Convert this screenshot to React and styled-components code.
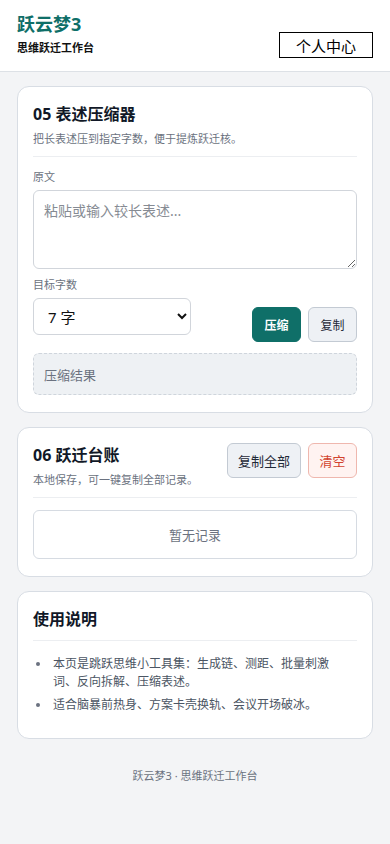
import React from 'react';
import styled, { createGlobalStyle } from 'styled-components';

const GlobalStyle = createGlobalStyle`
    * { box-sizing: border-box; }
    html, body {
        margin: 0;
        padding: 0;
        background: #f3f4f6;
        font-family: "Noto Sans", "Noto Sans CJK SC", sans-serif;
        color: #111827;
    }
`;

const App = () => {
    return (
        <>
            <GlobalStyle />
            <Header>
                <div className="brand">
                    <h1>跃云梦3</h1>
                    <p>思维跃迁工作台</p>
                </div>
                <ProfileButton>个人中心</ProfileButton>
            </Header>
            <Main>
                <CardTail />
                <Card>
                    <CardHead>
                        <div>
                            <h2>05 表述压缩器</h2>
                            <p>把长表述压到指定字数，便于提炼跃迁核。</p>
                        </div>
                    </CardHead>
                    <Label>原文</Label>
                    <TextArea placeholder="粘贴或输入较长表述..." />
                    <Label className="mt">目标字数</Label>
                    <ControlRow>
                        <Select defaultValue="7">
                            <option value="7">7 字</option>
                            <option value="12">12 字</option>
                            <option value="20">20 字</option>
                        </Select>
                        <Actions $offset={9}>
                            <Button $variant="primary">压缩</Button>
                            <Button>复制</Button>
                        </Actions>
                    </ControlRow>
                    <ResultBox>压缩结果</ResultBox>
                </Card>

                <Card>
                    <CardHead>
                        <div>
                            <h2>06 跃迁台账</h2>
                            <p>本地保存，可一键复制全部记录。</p>
                        </div>
                        <Actions>
                            <Button $size="md">复制全部</Button>
                            <Button $variant="danger" $size="md">清空</Button>
                        </Actions>
                    </CardHead>
                    <EmptyBox>暂无记录</EmptyBox>
                </Card>

                <Card>
                    <CardHead>
                        <div>
                            <h2>使用说明</h2>
                        </div>
                    </CardHead>
                    <Notes>
                        <li>本页是跳跃思维小工具集：生成链、测距、批量刺激词、反向拆解、压缩表述。</li>
                        <li>适合脑暴前热身、方案卡壳换轨、会议开场破冰。</li>
                    </Notes>
                </Card>
            </Main>
            <Footer>跃云梦3 · 思维跃迁工作台</Footer>
        </>
    );
};

export default App;

const Header = styled.header`
    display: flex;
    justify-content: space-between;
    align-items: flex-end;
    height: 72px;
    padding: 0 17px 13px 17px;
    background: #fff;
    border-bottom: 1px solid #dde1e6;

    .brand {
        padding-bottom: 2px;

        h1 {
            margin: 0;
            font-size: 18px;
            line-height: 24px;
            font-weight: 700;
            color: #0f6f68;
        }

        p {
            margin: 4px 0 0;
            font-size: 11px;
            line-height: 16px;
            font-weight: 700;
            color: #111;
        }
    }
`;

const ProfileButton = styled.button`
    width: 94px;
    height: 26px;
    padding: 0;
    background: #fff;
    border: 1px solid #000;
    border-radius: 0;
    font-family: inherit;
    font-size: 15px;
    color: #000;
`;

const Main = styled.main`
    display: flex;
    flex-direction: column;
    gap: 14px;
    padding: 0 17px;
    margin-top: -1px;
`;

const CardTail = styled.div`
    height: 1px;
    border: 1px solid #dde1e6;
    border-top: none;
    border-radius: 0 0 8px 8px;
    background: #fff;
`;

const Card = styled.section`
    background: #fff;
    border: 1px solid #d8dde4;
    border-radius: 12px;
    padding: 15px 15px 17px;
`;

const CardHead = styled.div`
    display: flex;
    justify-content: space-between;
    align-items: flex-start;
    padding-bottom: 9px;
    margin-bottom: 12px;
    border-bottom: 1px solid #eceef1;

    h2 {
        margin: 0;
        font-size: 16px;
        line-height: 24px;
        font-weight: 700;
        color: #111827;
    }

    p {
        margin: 5px 0 0;
        font-size: 11px;
        line-height: 16px;
        color: #6b7280;
    }
`;

const Label = styled.div`
    font-size: 11px;
    line-height: 16px;
    color: #6b7280;
    margin-top: 2px;
    margin-bottom: 5px;

    &.mt {
        margin-top: 8px;
    }
`;

const TextArea = styled.textarea`
    display: block;
    width: 100%;
    height: 79px;
    padding: 10px;
    border: 1px solid #d1d5db;
    border-radius: 6px;
    font-family: inherit;
    font-size: 14px;
    line-height: 20px;
    resize: vertical;

    &::placeholder {
        color: #868b93;
    }
`;

const ControlRow = styled.div`
    display: flex;
    justify-content: space-between;
    align-items: flex-start;
    gap: 8px;
`;

const Select = styled.select`
    width: 158px;
    height: 37px;
    padding: 0 10px;
    border: 1px solid #d1d5db;
    border-radius: 6px;
    background: #fff;
    font-family: inherit;
    font-size: 15px;
    color: #111;
`;

const Actions = styled.div`
    display: flex;
    gap: 7px;
    margin-top: ${(p) => p.$offset || 0}px;
`;

const Button = styled.button`
    height: 35px;
    padding: 0 ${(p) => (p.$size === 'md' ? '10px' : '11px')};
    min-width: 49px;
    border-radius: 6px;
    font-family: inherit;
    font-size: ${(p) => (p.$size === 'md' ? '13px' : '12px')};
    font-weight: ${(p) => (p.$variant === 'primary' ? 700 : 400)};
    border: 1px solid
        ${(p) => (p.$variant === 'primary' ? '#0f6f68' : p.$variant === 'danger' ? '#efb7ae' : '#c3cad3')};
    background: ${(p) => (p.$variant === 'primary' ? '#0f6f68' : p.$variant === 'danger' ? '#fff3f1' : '#eef1f5')};
    color: ${(p) => (p.$variant === 'primary' ? '#fff' : p.$variant === 'danger' ? '#d2432f' : '#1f2937')};
`;

const ResultBox = styled.div`
    margin-top: 11px;
    height: 42px;
    padding: 0 10px;
    display: flex;
    align-items: center;
    background: #eef1f4;
    border: 1px dashed #cfd5dc;
    border-radius: 6px;
    font-size: 13px;
    color: #6b7280;
`;

const EmptyBox = styled.div`
    height: 49px;
    display: flex;
    align-items: center;
    justify-content: center;
    border: 1px solid #d6dbe2;
    border-radius: 6px;
    font-size: 13px;
    color: #6b7280;
`;

const Notes = styled.ul`
    margin: 0;
    padding: 2px 16px 2px 18px;
    font-size: 12px;
    line-height: 18px;
    color: #4b5563;

    li {
        margin-bottom: 5px;
        padding-left: 2px;
    }

    li::marker {
        color: #6b7280;
    }
`;

const Footer = styled.footer`
    padding: 28px 0 60px;
    text-align: center;
    font-size: 11px;
    color: #6b7280;
`;
